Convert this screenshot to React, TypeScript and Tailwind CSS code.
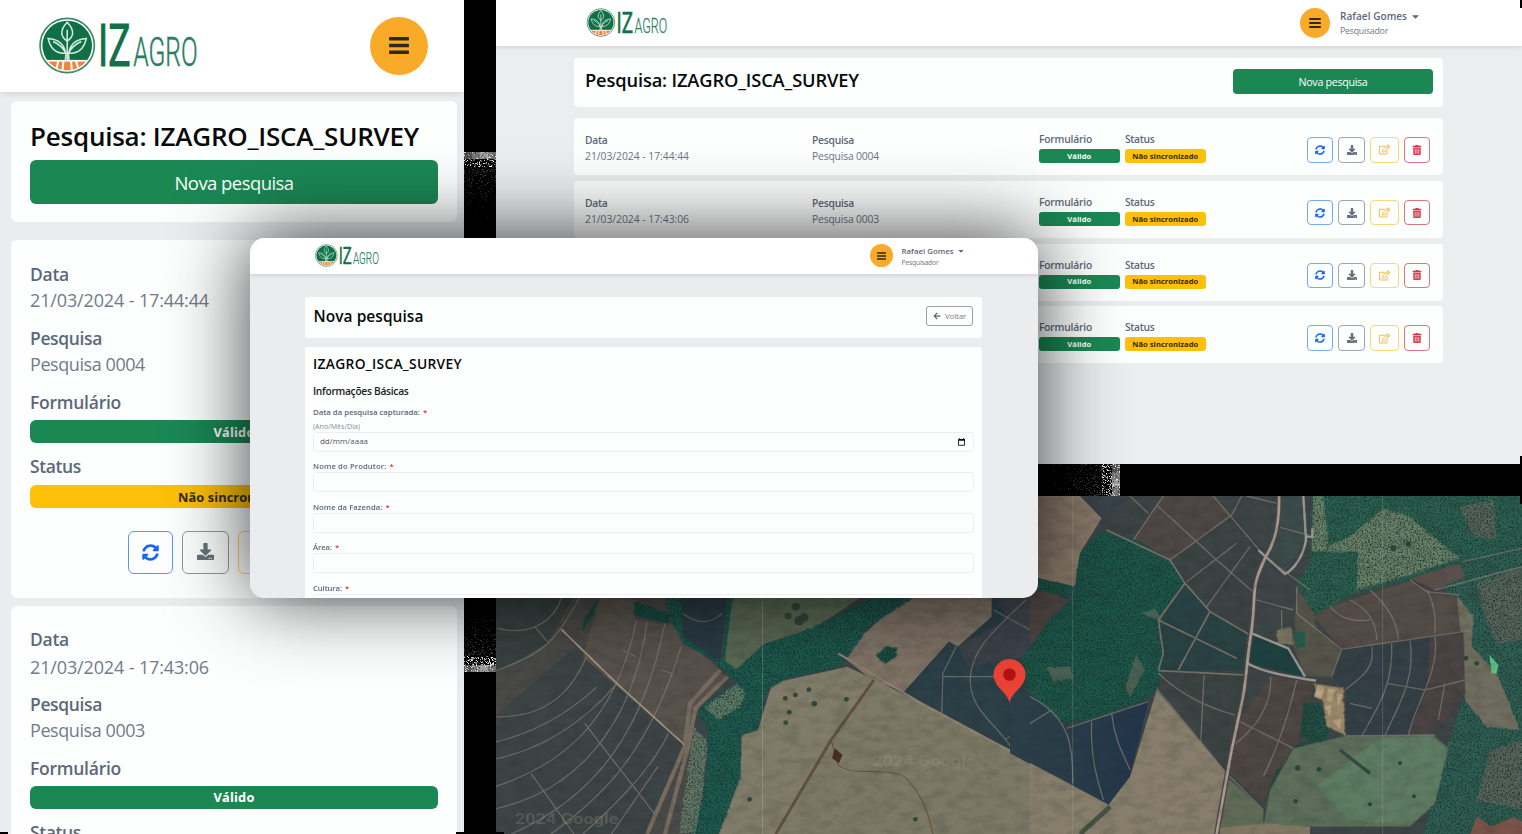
import React, { useLayoutEffect, useRef, useState } from "react";
import { FaSyncAlt, FaDownload, FaRegEdit, FaTrashAlt, FaArrowLeft, FaCaretDown } from "react-icons/fa";

/* Text whose tracking is adjusted so that it fills the given width. */
function Fit({ w, children, className = "" }: { w: number; children: string; className?: string }) {
  const ref = useRef<HTMLSpanElement>(null);
  const [spacing, setSpacing] = useState(0);
  useLayoutEffect(() => {
    if (ref.current) {
      setSpacing((w - ref.current.getBoundingClientRect().width) / children.length);
    }
  }, []);
  return (
    <span ref={ref} className={"inline-block whitespace-nowrap " + className} style={{ letterSpacing: spacing + "px" }}>
      {children}
    </span>
  );
}

function Logo({ className }: { className: string }) {
  return (
    <svg viewBox="28 22 474 170" className={className}>
      <defs>
        <clipPath id="disc">
          <circle cx="112" cy="107" r="74" />
        </clipPath>
      </defs>
      <circle cx="112" cy="107" r="81" fill="#fff" stroke="#3d8a68" strokeWidth="5" />
      <g clipPath="url(#disc)">
        <rect x="30" y="20" width="170" height="130" fill="#0f7048" />
        <rect x="30" y="155" width="170" height="40" fill="#f0843f" />
        <path d="M86 152 L76 192 M101 152 L97 192 M123 152 L127 192 M138 152 L150 192" stroke="#fff" strokeWidth="6" />
      </g>
      <g fill="none" stroke="#d9ece3" strokeWidth="4.5">
        <path d="M112 38 C90 62 91 80 112 94 C133 80 134 62 112 38 Z M112 60 V150" />
        <path d="M107 130 C103 100 82 88 55 86 C62 118 80 132 107 130 Z M70 95 C88 103 100 115 107 128" />
        <path d="M117 130 C121 100 142 88 169 86 C162 118 144 132 117 130 Z M154 95 C136 103 124 115 117 128" />
        <path d="M109 126 L106 155 M115 126 L118 155" />
      </g>
      <text x="204" y="168" fontSize="177" fontFamily="Roboto" fontWeight="400" fill="#117049" stroke="#117049" strokeWidth="3" textLength="97" lengthAdjust="spacingAndGlyphs">IZ</text>
      <text x="309" y="168" fontSize="122" fontFamily="Roboto" fontWeight="300" fill="#2c7f5d" stroke="#2c7f5d" strokeWidth="1.5" textLength="192" lengthAdjust="spacingAndGlyphs">AGRO</text>
    </svg>
  );
}

function Bars({ className }: { className: string }) {
  return (
    <svg viewBox="0 0 20 17" className={className} fill="#33291a">
      <rect width="20" height="3.6" rx=".8" />
      <rect y="6.7" width="20" height="3.6" rx=".8" />
      <rect y="13.4" width="20" height="3.6" rx=".8" />
    </svg>
  );
}

function MobileField({ label, lw, value, vw, late }: { label: string; lw: number; value: string; vw: number; late?: boolean }) {
  return (
    <div className={late ? "mb-[10px]" : "mb-[11px]"}>
      <div className="h-[26px] text-[17.5px] font-semibold leading-[26px] text-[#5d6878]"><Fit w={lw}>{label}</Fit></div>
      <div className={"h-[27px] text-[18px] leading-[27px] text-[#727b89] " + (late ? "mt-[2px]" : "")}><Fit w={vw}>{value}</Fit></div>
    </div>
  );
}

function MobileCard({ date, name, late }: { date: string; name: string; late?: boolean }) {
  return (
    <section className={"h-[358px] shrink-0 rounded-md bg-[#fdfefe] px-[19px] " + (late ? "pt-[19.5px]" : "pt-[21px]")}>
      <MobileField label="Data" lw={39} value={date} vw={179} late={late} />
      <MobileField label="Pesquisa" lw={72} value={name} vw={115} />
      <div className="h-[26px] text-[17.5px] font-semibold leading-[26px] text-[#5d6878]"><Fit w={91}>Formulário</Fit></div>
      <div className="mt-[5px] flex h-[23px] items-center justify-center rounded-md bg-[#1b8854] pt-[2px] text-[12.8px] font-bold text-white"><Fit w={41}>Válido</Fit></div>
      <div className="mt-[10px] h-[26px] text-[17.5px] font-semibold leading-[26px] text-[#5d6878]"><Fit w={51}>Status</Fit></div>
      <div className="mt-[6px] flex h-[23px] items-center justify-center rounded-md bg-[#fec009] pt-[2px] text-[12.8px] font-bold text-[#332a10]"><Fit w={112}>Não sincronizado</Fit></div>
      <div className="mt-[23px] flex h-[43px] justify-center gap-[9px] text-[17px]">
        <button className="flex w-[45px] items-center justify-center rounded-md border-[1.5px] border-[#5b95f5] text-[#1668f4]"><FaSyncAlt /></button>
        <button className="flex w-[47px] items-center justify-center rounded-md border-[1.5px] border-[#92979c] pb-[2px] text-[#68717a]"><FaDownload /></button>
        <button className="flex w-[48px] items-center justify-center rounded-md border-[1.5px] border-[#fbd35c] text-[#fbc02d]"><FaRegEdit /></button>
        <button className="flex w-[45px] items-center justify-center rounded-md border-[1.5px] border-[#dc5563] text-[#dc3545]"><FaTrashAlt /></button>
      </div>
    </section>
  );
}

function MobilePanel() {
  return (
    <div className="flex h-[834px] w-[464px] flex-col overflow-hidden bg-[#eaecee]">
      <header className="flex h-[92px] shrink-0 items-center justify-between bg-white pl-[39px] pr-[36px] pb-[1px] shadow-[0_1px_6px_rgba(0,0,0,0.12)]">
        <Logo className="h-[57px] w-[159px]" />
        <div className="flex size-[58px] items-center justify-center rounded-full bg-[#f9aa29]"><Bars className="h-[17px] w-[20px]" /></div>
      </header>
      <main className="flex flex-col pl-[11px] pr-[7px] pt-[9px]">
        <section className="h-[121px] shrink-0 rounded-md bg-[#fdfefe] px-[19px] pt-[18px]">
          <h1 className="h-[34px] text-[26px] font-semibold leading-[34px] text-[#08090a]"><Fit w={389}>Pesquisa: IZAGRO_ISCA_SURVEY</Fit></h1>
          <button className="mt-[7px] flex h-[43.5px] w-full items-center justify-center rounded-md bg-[#1b8854] pt-[3px] text-[18.5px] text-white"><Fit w={119}>Nova pesquisa</Fit></button>
        </section>
        <div className="mt-[18px] flex flex-col gap-[8px]">
          <MobileCard date="21/03/2024 - 17:44:44" name="Pesquisa 0004" />
          <MobileCard date="21/03/2024 - 17:43:06" name="Pesquisa 0003" late />
        </div>
      </main>
    </div>
  );
}

function SurveyRow({ date, name }: { date: string; name: string }) {
  return (
    <section className="flex h-[57px] items-start rounded-[4px] bg-[#fdfefe] pl-[11px] pr-[13px] text-[10.3px] text-[#6c7583]">
      <div className="w-[227px] pt-[14px]">
        <div className="h-[16px] font-semibold leading-[16px] text-[#5d6878]"><Fit w={22.5}>Data</Fit></div>
        <div className="h-[16px] leading-[16px]"><Fit w={104}>{date}</Fit></div>
      </div>
      <div className="w-[227px] pt-[14px]">
        <div className="h-[16px] font-semibold leading-[16px] text-[#5d6878]"><Fit w={42}>Pesquisa</Fit></div>
        <div className="h-[16px] leading-[16px]"><Fit w={67}>{name}</Fit></div>
      </div>
      <div className="w-[86px] pt-[13px]">
        <div className="h-[16px] font-semibold leading-[16px] text-[#5d6878]"><Fit w={53}>Formulário</Fit></div>
        <div className="mt-[2px] flex h-[14px] w-[80.5px] items-center justify-center rounded-[3px] bg-[#1b8854] pt-[1px] text-[7.6px] font-bold text-white"><Fit w={24}>Válido</Fit></div>
      </div>
      <div className="w-[86px] pt-[13px]">
        <div className="h-[16px] font-semibold leading-[16px] text-[#5d6878]"><Fit w={29.5}>Status</Fit></div>
        <div className="mt-[2px] flex h-[14px] w-[80.5px] items-center justify-center rounded-[3px] bg-[#fec009] pt-[1px] text-[7.6px] font-bold text-[#332a10]"><Fit w={66}>Não sincronizado</Fit></div>
      </div>
      <div className="ml-auto mt-[19px] flex h-[25.5px] gap-[5px] text-[10px]">
        <button className="flex w-[26px] items-center justify-center rounded-[4px] border border-[#76a8f8] text-[#1668f4]"><FaSyncAlt /></button>
        <button className="flex w-[27px] items-center justify-center rounded-[4px] border border-[#a0a5aa] text-[#68717a]"><FaDownload /></button>
        <button className="flex w-[29px] items-center justify-center rounded-[4px] border border-[#fbd778] text-[11px] text-[#f7bb45]"><FaRegEdit /></button>
        <button className="flex w-[26px] items-center justify-center rounded-[4px] border border-[#dd7480] text-[#d43c4b]"><FaTrashAlt /></button>
      </div>
    </section>
  );
}

const surveys = [
  ["21/03/2024 - 17:44:44", "Pesquisa 0004"],
  ["21/03/2024 - 17:43:06", "Pesquisa 0003"],
  ["21/03/2024 - 17:41:28", "Pesquisa 0002"],
  ["21/03/2024 - 17:40:12", "Pesquisa 0001"],
];

function DesktopPanel() {
  return (
    <div className="h-[464px] w-[1026px] overflow-hidden bg-[#ebedee]">
      <header className="flex h-[46px] items-start bg-white pl-[90px] pr-[98px] shadow-[0_1px_5px_rgba(0,0,0,0.13)]">
        <Logo className="mt-[8px] h-[29px] w-[82px]" />
        <div className="ml-auto mt-[7.5px] flex size-[30px] items-center justify-center rounded-full bg-[#f9aa29]"><Bars className="h-[10px] w-[12px]" /></div>
        <div className="ml-[10px] mt-[8px] w-[84px] text-[#5d6878]">
          <div className="flex h-[16px] items-center text-[10px] font-semibold leading-[16px]"><Fit w={67}>Rafael Gomes</Fit><FaCaretDown className="ml-[3px] size-[11px]" /></div>
          <div className="h-[14px] text-[8.8px] leading-[14px] text-[#727a86]"><Fit w={48}>Pesquisador</Fit></div>
        </div>
      </header>
      <main className="flex w-[947px] flex-col pl-[78px] pt-[12px]">
        <section className="flex h-[49px] items-start justify-between rounded-[4px] bg-[#fdfefe] pl-[11px] pr-[10px]">
          <h1 className="pt-[9px] text-[18.3px] font-semibold leading-[26px] text-[#08090a]"><Fit w={274}>Pesquisa: IZAGRO_ISCA_SURVEY</Fit></h1>
          <button className="mt-[11px] flex h-[25px] w-[200px] items-center justify-center rounded-[4px] bg-[#1b8854] pt-[2px] text-[10.7px] text-white"><Fit w={69}>Nova pesquisa</Fit></button>
        </section>
        <div className="mt-[11px] flex flex-col gap-[5.8px]">
          {surveys.map(([d, n]) => <SurveyRow key={n} date={d} name={n} />)}
        </div>
      </main>
    </div>
  );
}

function TextField({ label, w }: { label: string; w: number }) {
  return (
    <div className="h-[40.5px]">
      <div className="flex h-[11px] items-center text-[7.7px] font-semibold leading-[11px] text-[#5d6878]"><Fit w={w}>{label}</Fit><span className="ml-[3px] text-[#e03030]">*</span></div>
      <div className="h-[20px] rounded-[3px] border border-[#eceef0]" />
    </div>
  );
}

function SurveyForm() {
  return (
    <div className="absolute left-[250px] top-[238px] h-[360px] w-[788px] rounded-[15px] shadow-[0_-2px_80px_rgba(0,0,0,0.76)]">
      <div className="h-full w-full overflow-hidden rounded-[15px] bg-[#ebecee]">
        <header className="flex h-[36px] items-start bg-white pl-[65px] pr-[66px] shadow-[0_1px_4px_rgba(0,0,0,0.14)]">
          <Logo className="mt-[6px] h-[23px] w-[64px]" />
          <div className="ml-auto mt-[6px] flex size-[23px] items-center justify-center rounded-full bg-[#f9aa29]"><Bars className="h-[8px] w-[9px]" /></div>
          <div className="ml-[8.5px] mt-[7px] w-[70.5px] text-[#5d6878]">
            <div className="flex h-[12px] items-center text-[7.8px] font-semibold leading-[12px]"><Fit w={52}>Rafael Gomes</Fit><FaCaretDown className="ml-[3px] size-[8px]" /></div>
            <div className="h-[11px] text-[6.8px] leading-[11px] text-[#727a86]"><Fit w={37}>Pesquisador</Fit></div>
          </div>
        </header>
        <main className="ml-[55px] w-[677px] pt-[23px]">
          <section className="flex h-[41px] items-start justify-between rounded-[3px] bg-[#fdfefe] pl-[8.5px] pr-[9px]">
            <h2 className="pt-[9px] text-[15.5px] font-semibold leading-[21px] text-[#08090a]"><Fit w={110}>Nova pesquisa</Fit></h2>
            <button className="mt-[8.5px] flex h-[20px] w-[47px] items-center justify-center rounded-[3px] border border-[#9a9fa4] text-[8px] text-[#7c838a]"><FaArrowLeft className="mr-[4px] size-[8px] text-[#5c636a]" /><Fit w={21}>Voltar</Fit></button>
          </section>
          <section className="mt-[9px] h-[300px] rounded-[3px] bg-[#fdfefe] pl-[8px] pr-[8.5px] pt-[7px]">
            <h3 className="h-[20px] text-[13.8px] font-semibold leading-[20px] text-[#08090a]"><Fit w={149}>IZAGRO_ISCA_SURVEY</Fit></h3>
            <h4 className="mt-[8.5px] h-[17px] text-[10.2px] font-semibold leading-[17px] text-[#191b1d]"><Fit w={95.5}>Informações Básicas</Fit></h4>
            <div className="mt-[6.5px] flex h-[12px] items-center text-[7.8px] font-semibold leading-[12px] text-[#5d6878]"><Fit w={107}>Data da pesquisa capturada:</Fit><span className="ml-[3px] text-[#e03030]">*</span></div>
            <div className="mt-[3.5px] h-[10px] text-[7px] leading-[10px] text-[#858c95]"><Fit w={47}>(Ano/Mês/Dia)</Fit></div>
            <div className="flex h-[20px] items-center justify-between rounded-[3px] border border-[#eceef0] pl-[6px] pr-[8px] text-[7.9px] text-[#50565c]">
              <Fit w={48}>dd/mm/aaaa</Fit>
              <svg viewBox="0 0 7 8" className="h-[8px] w-[7px]"><path d="M.5 1.5 H6.5 V7.3 H.5 Z" fill="none" stroke="#111" strokeWidth=".9" /><path d="M.2 1 H6.8 V2.8 H.2 Z M1.2 0 H2 V1 H1.2 Z M5 0 H5.8 V1 H5 Z" fill="#111" /></svg>
            </div>
            <div className="mt-[9.5px]">
              <TextField label="Nome do Produtor:" w={73.5} />
              <TextField label="Nome da Fazenda:" w={69.5} />
              <TextField label="Área:" w={19} />
              <TextField label="Cultura:" w={29} />
            </div>
          </section>
        </main>
      </div>
    </div>
  );
}

/* Aerial view of the farm. */
function FarmMap() {
  return (
    <svg viewBox="496 496 1026 338" className="block h-[338px] w-[1026px]">
      <defs>
        <filter id="leaf" x="0" y="0" width="100%" height="100%" colorInterpolationFilters="sRGB">
          <feTurbulence type="fractalNoise" baseFrequency="0.2" numOctaves="4" seed="4" result="n" />
          <feColorMatrix in="n" values="0 0 0 0 0.06  0 0 0 0 0.2  0 0 0 0 0.19  2.2 0 0 0 -0.92" result="d" />
          <feComposite in="d" in2="SourceAlpha" operator="in" result="c" />
          <feMerge><feMergeNode in="SourceGraphic" /><feMergeNode in="c" /></feMerge>
        </filter>
        <filter id="grain" x="0" y="0" width="100%" height="100%" colorInterpolationFilters="sRGB">
          <feTurbulence type="fractalNoise" baseFrequency="0.06 0.12" numOctaves="4" seed="9" />
          <feColorMatrix values="0 0 0 0 0.12  0 0 0 0 0.13  0 0 0 0 0.13  1.6 0 0 0 -0.64" />
        </filter>
        <filter id="rough" x="-5%" y="-5%" width="110%" height="110%" colorInterpolationFilters="sRGB">
          <feTurbulence type="fractalNoise" baseFrequency="0.09" numOctaves="3" seed="2" />
          <feDisplacementMap in="SourceGraphic" scale="9" xChannelSelector="R" yChannelSelector="G" />
        </filter>
        <linearGradient id="navy">
          <stop offset="0" stopColor="#2c4048" />
          <stop offset=".45" stopColor="#293c49" />
          <stop offset="1" stopColor="#22354b" />
        </linearGradient>
      </defs>
      <rect x="496" y="496" width="1026" height="338" fill="#3d4546" />

      <g transform="translate(490 580) scale(.35714 .33333)">
        <path d="M0 0 H540 L560 200 L660 290 L570 390 L550 762 H0Z" fill="#4a4b48" />
        <path d="M0 420 L240 200 L540 490 L450 762 H0Z" fill="#3d4446" />
        <path d="M0 20 H250 L160 190 L0 290Z" fill="#384341" />
        <path d="M310 50 L410 60 L405 120 L530 140 L660 290 L590 370 L550 500 L260 230Z" fill="#59534d" />
        <path d="M520 30 H665 L645 240 L610 235 L540 180Z" fill="#2b3c45" />
        <path d="M680 30 H1070 L900 150 L770 190 L690 270 L655 260Z" fill="#5b6a54" />
        <path d="M1180 30 H1405 V110 L1310 200 L1285 185 L1160 335 L1070 300 L975 220 L1060 150Z" fill="#807466" />
        <path d="M1405 30 H1620 V620 L1160 335 L1285 185 L1310 200 L1405 110Z" fill="#2c4048" />
        <path d="M1405 30 H1600 L1530 160 L1450 115Z M1310 200 L1450 115 L1530 160 L1500 230 L1340 260Z" fill="#3c434a" />
        <path d="M790 310 L1000 260 L1080 300 L1200 365 L1640 620 V762 H640 L700 590 L705 465 L750 450Z" fill="#807c69" />
        <path d="M1080 305 L1640 620 V762 H800 L955 480Z" fill="#7c7966" />
        <g filter="url(#leaf)">
          <path filter="url(#rough)" d="M1185 54 L1060 140 L1000 235 L970 262 L830 295 L775 330 L750 450 L700 465 L702 590 L640 762 H565 L605 600 L610 450 L580 400 L600 370 L690 310 L625 240 L540 190 L500 110 L490 45 H535 L540 165 L625 235 L650 235 L665 50 H680 L655 240 L690 268 L765 195 L900 145 L1050 65 L1090 50Z" fill="#205c50" />
          <path filter="url(#rough)" d="M405 65 L500 100 L505 130 L405 108Z M1080 225 L1110 198 L1140 205 L1138 230 L1105 252Z M262 120 L300 60 L290 100 L258 155Z" fill="#1b5045" />
          <path d="M1510 230 L1568 130 V350 L1510 290Z" fill="#24544b" />
        </g>
        <g filter="url(#leaf)" opacity=".8">
          <path filter="url(#rough)" d="M600 380 L690 310 L715 340 L700 380 L640 420Z M570 440 L608 480 L595 640 L575 760 H530Z" fill="#74856f" />
        </g>
        <path d="M645 270 L560 370 L545 500 L440 762 M665 290 L575 385 L555 500 L490 762" stroke="#776c60" strokeWidth="12" fill="none" />
        <g fill="none" stroke="#8b8276" strokeWidth="3.5" opacity=".65">
          <path d="M20 145 C120 170 180 120 200 54 M0 280 C140 220 170 210 250 54 M0 410 C160 420 230 330 270 230 M0 540 C150 510 270 420 355 310 M0 625 C190 560 350 440 410 120 M0 690 C240 640 400 440 440 125 M60 762 C300 650 430 450 490 130 M170 762 C330 640 450 500 535 200 M260 762 C410 620 470 530 500 460 M340 762 L470 560 M0 490 C130 460 230 390 300 320" />
          <path d="M125 140 L165 190 M265 430 L460 700 M115 580 L235 762 M370 210 L410 230 M480 270 L510 280 M540 100 Q600 150 650 100" />
          <path d="M1270 290 H1440 M1305 200 L1268 280 L1265 400 M1500 60 C1400 160 1340 220 1345 310 C1350 400 1430 440 1470 520 M1480 310 L1568 390 M1568 400 L1440 480 M1410 90 L1530 160" />
        </g>
        <path d="M200 148 L355 310 L545 495" stroke="#a39582" strokeWidth="5" fill="none" />
        <path d="M800 762 L955 480 L1075 300" stroke="#5a493c" strokeWidth="8" fill="none" opacity=".85" />
        <path d="M975 220 L1200 365 L1600 595" stroke="#8f806f" strokeWidth="6" fill="none" />
        <path d="M955 480 L975 555 C1010 590 1100 560 1160 590 Q1220 650 1240 762" stroke="#665644" strokeWidth="3" fill="none" />
        <path d="M965 505 L987 525 L977 550 L958 535Z" fill="#482d25" />
        <g fill="#34483d">
          <circle cx="827" cy="355" r="7" /><circle cx="855" cy="345" r="7" /><circle cx="893" cy="329" r="7" /><circle cx="908" cy="371" r="8" /><circle cx="838" cy="397" r="7" /><circle cx="828" cy="428" r="7" /><circle cx="998" cy="358" r="7" /><circle cx="727" cy="658" r="7" /><circle cx="1191" cy="718" r="7" />
          <circle cx="856" cy="80" r="12" /><circle cx="835" cy="108" r="10" /><circle cx="866" cy="122" r="14" /><circle cx="880" cy="112" r="12" />
        </g>
        <g fill="#a9a58e" opacity=".25" fontFamily="Roboto" fontWeight="700" fontSize="44">
          <text x="1070" y="558" textLength="290" lengthAdjust="spacingAndGlyphs">2024 Google</text>
          <text x="70" y="732" textLength="290" lengthAdjust="spacingAndGlyphs">2024 Google</text>
        </g>
      </g>

      <g transform="translate(1030 440) scale(.33333)">
        <path d="M380 168 H560 L700 330 L660 580 L640 760 L590 1000 L380 700 L385 540 L465 430 L230 270Z" fill="#3b4443" />
        <path d="M400 168 H550 L605 230 L420 360 L310 300Z" fill="#4e4745" />
        <path d="M465 430 L540 515 L650 580 L640 690 L385 695 L395 540Z" fill="#294243" />
        <path d="M660 580 L775 630 L825 710 L655 670Z" fill="#1f4140" />
        <path d="M720 710 L855 725 L800 920 L700 1090 L600 1000 L625 850Z" fill="#4d4643" />
        <path d="M750 168 H825 L835 290 L760 400 L705 350Z" fill="#3c4c4b" />
        <path d="M24 168 H150 L215 235 L150 340 L135 440 L24 415Z" fill="#8a7a6a" />
        <path d="M160 168 H300 L215 235Z" fill="#39434a" />
        <path d="M24 450 L120 480 L60 540 L0 620 V450Z" fill="#4d4643" />
        <g filter="url(#leaf)">
          <path filter="url(#rough)" d="M215 270 L330 305 L430 370 L465 430 L395 525 L385 600 L400 640 L385 740 L350 780 L200 835 L100 850 L0 760 L-30 660 L60 540 L130 470 L24 450 V415 L135 440 L150 340Z" fill="#20584a" />
          <path d="M845 168 H1476 V330 L1300 370 L1140 420 L960 465 L850 530 L800 430 L840 370Z" fill="#2f6251" />
          <path d="M1300 370 L1476 330 V1182 H1180 L1250 920 L1300 780 L1310 560 L1240 440Z" fill="#336154" />
          <path d="M820 790 L870 790 L900 870 L880 910 L810 890Z M790 920 L870 890 L740 990 L700 1090Z" fill="#264f45" />
        </g>
        <g filter="url(#leaf)" opacity=".8">
          <path filter="url(#rough)" d="M850 168 L880 168 L895 320 L960 290 L1060 205 L1130 225 L1290 355 L1120 410 L980 450 L985 335 L845 335Z" fill="#7f8d70" />
          <path filter="url(#rough)" d="M1340 430 L1476 380 V600 L1400 610 L1360 520Z M1380 930 L1476 900 V1110 L1340 1080Z M1290 200 L1390 180 L1400 300 L1330 290Z" fill="#6a6a60" />
        </g>
        <path filter="url(#rough)" d="M1280 465 L1330 530 L1325 620 L1400 700 L1470 870 L1370 860 L1305 780Z" fill="#706e5f" />
        <path filter="url(#rough)" d="M50 680 L120 680 L130 715 L70 725Z M320 640 L345 690 L300 770 L285 740Z M335 520 L380 505 L395 545Z" fill="#59695a" opacity=".75" />
        <path d="M1140 415 L1290 370 L1305 410 L1215 450Z" fill="#5c504d" />
        <path d="M850 530 L900 500 L1140 422 L1200 455 L1280 470 L1290 575 L935 628Z" fill="#544c47" />
        <path d="M800 440 L850 520 L860 570 L935 628 L905 710 L825 710 L790 620Z" fill="#545449" />
        <path d="M935 628 L1300 575 L1305 760 L1260 830 L1200 890 L945 888 L950 750 L905 710Z" fill="#344046" />
        <path d="M1200 590 L1300 575 L1305 760 L1260 830 L1200 890 L1130 888 L1190 750Z" fill="#494343" />
        <path d="M945 888 L1210 885 L1255 925 L1215 1090 L1140 1160 L700 1160 L720 1050 L790 925Z" fill="#5d6e5b" />
        <path filter="url(#rough)" d="M1050 895 L1210 890 L1250 930 L1215 1090 L1140 1155 L960 1140 L860 1040 L960 960Z" fill="#5e7c62" />
        <path d="M-60 700 L0 760 L110 860 L355 785 L300 1010 L235 1095 L0 972 L-60 940Z" fill="url(#navy)" />
        <path d="M0 970 L235 1095 L300 1010 L380 750 L590 1000 L560 1182 H0Z" fill="#877e6b" />
        <path d="M590 1010 L700 1110 V1182 H565Z" fill="#606b57" />
        <path filter="url(#rough)" d="M850 730 L940 745 L945 885 L890 860 L880 790Z" fill="#9a8668" />
        <g fill="#bca680">
          <path d="M862 735 L885 742 L872 778 L852 770Z M893 745 L915 750 L905 785 L890 780Z M885 800 L905 795 L900 830Z M920 760 L938 762 L925 800Z M905 840 L935 835 L930 868Z" />
        </g>
        <path filter="url(#rough)" d="M740 570 L785 560 L790 615 L745 610Z" fill="#797565" />
        <path d="M793 575 L825 575 V620 L798 625Z" fill="#245a4a" />
        <path d="M1378 645 L1405 675 L1400 700 L1385 700Z" fill="#5bc382" />
        <path d="M1320 1182 L1340 1130 L1385 1160 L1450 1130 L1476 1145 V1182Z" fill="#7b5348" />
        <path d="M570 1165 L700 1150 L840 1160 V1182 H570Z" fill="#817863" />
        <path d="M230 270 L420 360 L465 430 L540 515 L660 585 M385 540 L620 655 M385 692 L645 705 M385 690 L400 640 L385 540 L465 430 M540 515 L445 690" stroke="#777069" strokeWidth="5" fill="none" />
        <g fill="none" stroke="#857c74" strokeWidth="4" opacity=".7">
          <path d="M300 168 L355 220 M400 168 L310 300 M380 195 L560 360 L680 465 M420 360 L605 225 L635 168 M470 425 L620 310 M530 500 L660 320 M550 168 L705 350 L840 450 M680 480 L790 510 M755 510 V570 M650 168 L740 190 M750 262 L835 285" />
          <path d="M522 705 L512 910 M385 700 Q480 790 615 825 M722 710 C725 800 680 860 612 915 M800 720 C770 850 730 950 700 1010 M620 840 L790 925 M380 745 L590 1000 L700 1110" />
          <path d="M800 440 L800 520 L935 628 L905 710 M935 628 L1320 572 M900 500 Q940 550 1020 540 M960 480 Q1040 520 1040 600 M1020 450 Q1100 520 1105 598 M1190 450 Q1220 500 1215 580 M1025 620 C1040 690 980 720 945 750 M1085 610 C1090 730 1050 790 995 888 M1140 600 C1160 730 1090 820 1065 888 M1215 590 C1230 700 1150 800 1135 888 M1245 730 L1225 840 M1070 730 L1185 750 L1305 720 M945 888 L1215 885 M960 790 L1025 805" />
          <path d="M0 770 C120 830 130 920 128 1030 M110 865 L355 785 M185 845 C180 970 210 1040 220 1080 M245 820 C255 910 285 950 300 990 M0 850 L65 810 M0 970 L235 1095" />
          <path d="M1140 420 L1190 455 L1290 465 M1215 450 L1476 380 M1300 365 L1476 325" />
        </g>
        <path d="M747 168 C750 280 720 330 705 355 C660 450 680 450 665 570 C650 650 650 730 635 790 L605 930 L585 1040 L560 1182" stroke="#4e4743" strokeWidth="16" fill="none" />
        <path d="M747 168 C750 280 720 330 705 355 C660 450 680 450 665 570 C650 650 650 730 635 790 L605 930 L585 1040 L560 1182" stroke="#a69b90" strokeWidth="8" fill="none" />
        <path d="M820 168 L828 300 C820 350 790 390 765 402 L685 330 M828 290 H847 V265 M665 580 L775 625 L825 710 M652 670 Q700 700 858 722" stroke="#9c9893" strokeWidth="7" fill="none" />
        <path d="M150 1182 L240 1100" stroke="#455345" strokeWidth="14" />
        <path d="M930 930 L1020 1000" stroke="#334b40" strokeWidth="10" />
        <g fill="#29463d">
          <circle cx="803" cy="984" r="8" /><circle cx="797" cy="1084" r="7" /><circle cx="867" cy="988" r="7" /><circle cx="1020" cy="1093" r="6" /><circle cx="1110" cy="969" r="6" /><circle cx="1152" cy="1069" r="6" /><circle cx="970" cy="772" r="12" /><circle cx="1090" cy="325" r="9" /><circle cx="1135" cy="312" r="8" /><circle cx="1308" cy="655" r="7" /><circle cx="1340" cy="670" r="7" />
        </g>
        <path d="M128 168 V1182 M1058 168 V1182" stroke="#c6c9c0" strokeWidth="2" opacity=".32" />
      </g>
      <path d="M762.5 590 V834" stroke="#c6c9c0" strokeWidth=".7" opacity=".4" />
      <rect x="496" y="496" width="1026" height="338" filter="url(#grain)" opacity=".22" />
      <path d="M1009.5 703.5 C1008 692 994 688 993.5 675 A16 16 0 0 1 1025.5 675 C1025 688 1011 692 1009.5 703.5Z" fill="#ea4335" />
      <circle cx="1009.5" cy="674.5" r="6.3" fill="#b11312" />
    </svg>
  );
}

/* Dithered fringe where the shadow fades out over the gutters. */
function Fringe({ w, h, dir, className }: { w: number; h: number; dir: "up" | "down" | "right"; className: string }) {
  let s = 17;
  const rand = () => {
    s = (s * 16807) % 2147483647;
    return s / 2147483647;
  };
  const dots: React.ReactNode[] = [];
  const len = dir === "right" ? w : h;
  for (let y = 0; y < h; y++) {
    for (let x = 0; x < w; x++) {
      const t = (dir === "right" ? x : dir === "down" ? y : h - 1 - y) / len;
      const r = rand();
      const edge = t > 0.9;
      if (edge || r < t * t * 0.55) {
        const block = 80 + ((Math.floor((dir === "right" ? y : x) / 8) * 37) % 80);
        const v = edge ? (rand() < 0.25 ? 40 + rand() * 215 : block) : t > 0.78 ? 40 + rand() * 215 : 15 + rand() * t * 70;
        dots.push(<rect key={x + "-" + y} x={x} y={y} width="1" height="1" fill={`rgb(${v | 0},${v | 0},${v | 0})`} />);
      }
    }
  }
  return <svg viewBox={`0 0 ${w} ${h}`} width={w} height={h} shapeRendering="crispEdges" className={"absolute " + className}>{dots}</svg>;
}

export default function App() {
  return (
    <div className="relative h-[834px] w-[1522px] overflow-hidden bg-black font-['Open_Sans','Noto_Sans',sans-serif]">
      <div className="flex gap-[32px]">
        <MobilePanel />
        <div className="flex flex-col gap-[32px]">
          <DesktopPanel />
          <FarmMap />
        </div>
      </div>
      <SurveyForm />
      <Fringe w={32} h={72} dir="up" className="left-[464px] top-[152px]" />
      <Fringe w={32} h={74} dir="down" className="left-[464px] top-[598px]" />
      <Fringe w={82} h={32} dir="right" className="left-[1038px] top-[464px]" />
      <div className="absolute right-0 top-0 h-[8px] w-[2px] bg-black" />
      <div className="absolute right-0 top-[456px] h-[48px] w-[2px] bg-black" />
      <div className="absolute left-0 top-[832px] h-[2px] w-[8px] bg-black" />
      <div className="absolute left-[456px] top-[832px] h-[2px] w-[48px] bg-black" />
    </div>
  );
}
